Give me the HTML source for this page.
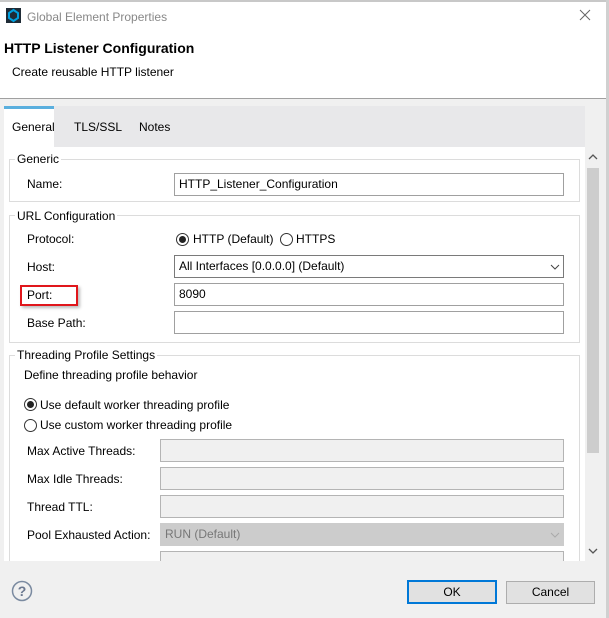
<!DOCTYPE html><html><head><style>
*{margin:0;padding:0;box-sizing:border-box}
body{width:609px;height:618px;position:relative;overflow:hidden;background:#fff;font-family:"Liberation Sans",sans-serif;font-size:12px;color:#000}
.a{position:absolute;white-space:nowrap}
.in{position:absolute;border:1px solid #a0a0a0;background:#fff;height:23px;padding-left:4px;line-height:21px}
.dis{background:#f0f0f0;border-color:#b4b4b4}
.grp{position:absolute;border:1px solid #dcdcdc}
.lg{position:absolute;background:#fff;padding:0 2px;line-height:14px}
.rb{position:absolute;width:13px;height:13px;border:1px solid #333;border-radius:50%;background:#fff}
.rb.on::after{content:"";position:absolute;left:2px;top:2px;width:7px;height:7px;border-radius:50%;background:#222}
.btn{position:absolute;height:23px;border:1px solid #adadad;background:#e1e1e1;text-align:center;line-height:21px}
</style></head><body>
<div class="a" style="left:0;top:0;width:609px;height:2px;background:#c8c8c8"></div>
<div class="a" style="left:606px;top:0;width:3px;height:618px;background:#d0d0d0"></div>
<svg class="a" style="left:6px;top:8px" width="15" height="15"><rect width="15" height="15" fill="#1f2b36"/><path d="M7.5 2 L12 5 L12 10 L7.5 13 L3 10 L3 5Z" fill="none" stroke="#00a0df" stroke-width="2"/></svg>
<div class="a" style="left:27px;top:10px;color:#888;font-size:12px">Global Element Properties</div>
<svg class="a" style="left:579px;top:9px" width="12" height="12"><path d="M1 1L11 11M11 1L1 11" stroke="#666" stroke-width="1"/></svg>
<div class="a" style="left:4px;top:40px;font-size:14px;font-weight:bold">HTTP Listener Configuration</div>
<div class="a" style="left:12px;top:65px">Create reusable HTTP listener</div>
<div class="a" style="left:0;top:98px;width:606px;height:1px;background:#a0a0a0"></div>
<div class="a" style="left:0;top:99px;width:606px;height:519px;background:#f0f0f0"></div>
<div class="a" style="left:4px;top:106px;width:581px;height:41px;background:#e8e8ea"></div>
<div class="a" style="left:4px;top:106px;width:50px;height:42px;background:#fff;border-top:3px solid #5aafde"></div>
<div class="a" style="left:12px;top:120px">General</div>
<div class="a" style="left:74px;top:120px">TLS/SSL</div>
<div class="a" style="left:139px;top:120px">Notes</div>
<div class="a" style="left:4px;top:147px;width:581px;height:414px;background:#fff;overflow:hidden">
<div class="grp" style="left:5px;top:12px;width:571px;height:43px"></div>
<div class="lg" style="left:11px;top:5px">Generic</div>
<div class="a" style="left:23px;top:30px">Name:</div>
<div class="in" style="left:170px;top:26px;width:390px">HTTP_Listener_Configuration</div>
<div class="grp" style="left:5px;top:68px;width:571px;height:128px"></div>
<div class="lg" style="left:11px;top:62px">URL Configuration</div>
<div class="a" style="left:23px;top:85px">Protocol:</div>
<div class="rb on" style="left:172px;top:86px"></div><div class="a" style="left:189px;top:85px">HTTP (Default)</div>
<div class="rb" style="left:276px;top:86px"></div><div class="a" style="left:292px;top:85px">HTTPS</div>
<div class="a" style="left:23px;top:113px">Host:</div>
<div class="in" style="left:170px;top:108px;width:390px;border-color:#7a7a7a">All Interfaces [0.0.0.0] (Default)</div>
<svg class="a" style="left:546px;top:117px" width="10" height="6"><path d="M1 1L5 5L9 1" fill="none" stroke="#444"/></svg>
<div class="a" style="left:23px;top:141px">Port:</div>
<div class="a" style="left:16px;top:138px;width:58px;height:21px;border:2px solid #e0161b;box-shadow:2px 2px 3px #bbb"></div>
<div class="in" style="left:170px;top:136px;width:390px">8090</div>
<div class="a" style="left:23px;top:169px">Base Path:</div>
<div class="in" style="left:170px;top:164px;width:390px"></div>
<div class="grp" style="left:5px;top:208px;width:571px;height:230px"></div>
<div class="lg" style="left:11px;top:201px">Threading Profile Settings</div>
<div class="a" style="left:20px;top:221px">Define threading profile behavior</div>
<div class="rb on" style="left:20px;top:251px"></div><div class="a" style="left:36px;top:251px">Use default worker threading profile</div>
<div class="rb" style="left:20px;top:272px"></div><div class="a" style="left:36px;top:271px">Use custom worker threading profile</div>
<div class="a" style="left:23px;top:297px">Max Active Threads:</div>
<div class="in dis" style="left:156px;top:292px;width:404px"></div>
<div class="a" style="left:23px;top:325px">Max Idle Threads:</div>
<div class="in dis" style="left:156px;top:320px;width:404px"></div>
<div class="a" style="left:23px;top:353px">Thread TTL:</div>
<div class="in dis" style="left:156px;top:348px;width:404px"></div>
<div class="a" style="left:23px;top:381px">Pool Exhausted Action:</div>
<div class="in" style="left:156px;top:376px;width:404px;background:#cccccc;border-color:#cccccc;color:#777">RUN (Default)</div>
<svg class="a" style="left:546px;top:385px" width="10" height="6"><path d="M1 1L5 5L9 1" fill="none" stroke="#aaa"/></svg>
<div class="a" style="left:23px;top:412px">Thread Wait Timeout:</div>
<div class="in dis" style="left:156px;top:404px;width:404px"></div>
</div>
<div class="a" style="left:585px;top:147px;width:16px;height:414px;background:#f0f0f0"></div>
<div class="a" style="left:587px;top:168px;width:12px;height:285px;background:#cdcdcd"></div>
<svg class="a" style="left:588px;top:153px" width="10" height="7"><path d="M1 6L5 2L9 6" fill="none" stroke="#555" stroke-width="1.3"/></svg>
<svg class="a" style="left:588px;top:548px" width="10" height="7"><path d="M1 1L5 5L9 1" fill="none" stroke="#555" stroke-width="1.3"/></svg>
<svg class="a" style="left:11px;top:580px" width="22" height="22"><circle cx="11" cy="11" r="9.5" fill="none" stroke="#7a8aa0" stroke-width="1.5"/><text x="11" y="16" text-anchor="middle" font-family="Liberation Sans" font-size="14" font-weight="bold" fill="#6b7890">?</text></svg>
<div class="btn" style="left:407px;top:580px;width:90px;height:24px;border:2px solid #0078d7;line-height:20px">OK</div>
<div class="btn" style="left:506px;top:581px;width:89px">Cancel</div>
</body></html>
